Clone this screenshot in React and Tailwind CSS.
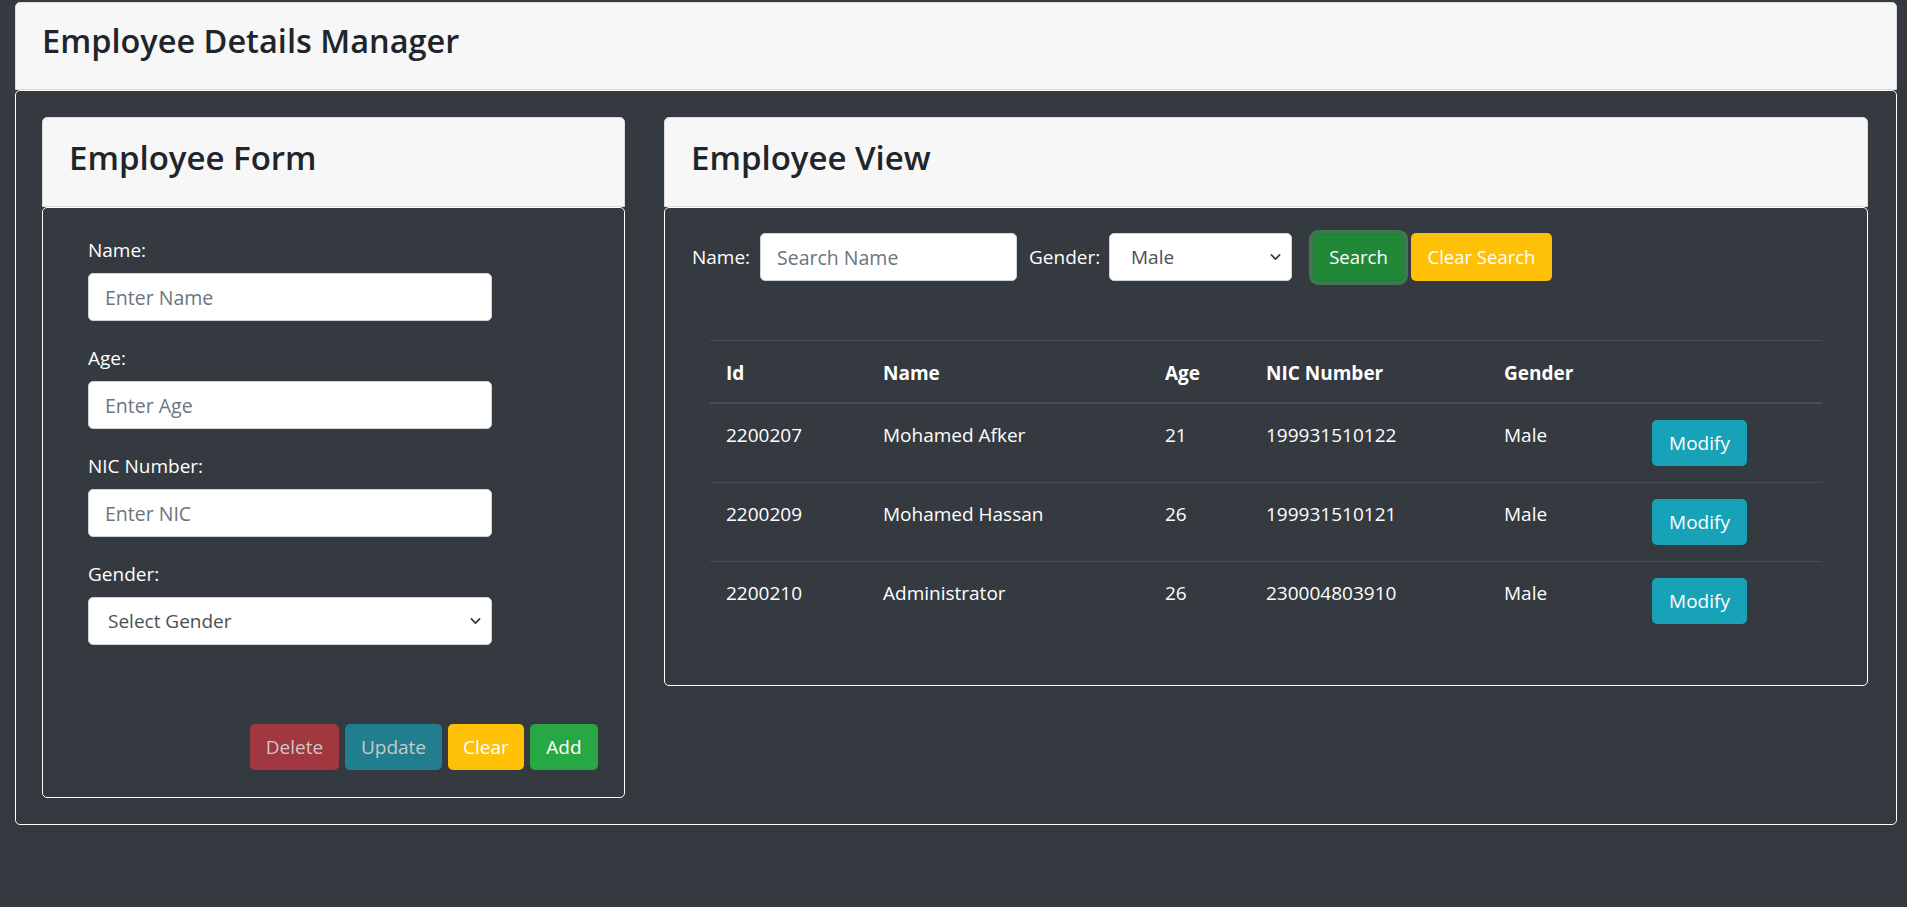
import { useState } from "react";

const employees = [
  { id: "2200207", name: "Mohamed Afker", age: "21", nic: "199931510122", gender: "Male" },
  { id: "2200209", name: "Mohamed Hassan", age: "26", nic: "199931510121", gender: "Male" },
  { id: "2200210", name: "Administrator", age: "26", nic: "230004803910", gender: "Male" },
];

function Chevron() {
  return (
    <svg
      className="pointer-events-none absolute right-[11px] top-1/2 -translate-y-1/2"
      width="11"
      height="11"
      viewBox="0 0 16 16"
      fill="none"
      stroke="#343a40"
      strokeWidth="2.4"
      strokeLinecap="round"
      strokeLinejoin="round"
    >
      <path d="M2 5l6 6 6-6" />
    </svg>
  );
}

function Field({ label, placeholder }) {
  return (
    <div className="mb-[23px]">
      <label className="block text-white text-[19px] leading-[28px] mb-[9px]">{label}</label>
      <input
        type="text"
        placeholder={placeholder}
        className="w-[404px] h-[48px] bg-white border border-[#ced4da] rounded-[5px] px-4 text-[19.5px] text-[#495057] placeholder:text-[#6c757d] outline-none"
      />
    </div>
  );
}

function EmployeeForm() {
  const [gender, setGender] = useState("");

  return (
    <div className="w-[583px] shrink-0">
      <div className="h-[90px] bg-[#f7f7f7] border border-[#dcdcdc] rounded-t-[5px] px-[26px] pt-[20px]">
        <h2 className="text-[33px] leading-[40px] font-semibold text-[#212529]">Employee Form</h2>
      </div>
      <div className="bg-[#343a40] border border-white rounded-[5px] pl-[45px] pr-[26px] pt-[28px] pb-[27px]">
        <Field label="Name:" placeholder="Enter Name" />
        <Field label="Age:" placeholder="Enter Age" />
        <Field label="NIC Number:" placeholder="Enter NIC" />
        <div>
          <label className="block text-white text-[19px] leading-[28px] mb-[9px]">Gender:</label>
          <div className="relative w-[404px]">
            <select
              value={gender}
              onChange={(e) => setGender(e.target.value)}
              className="appearance-none w-full h-[48px] bg-white border border-[#ced4da] rounded-[5px] pl-[19px] text-[19px] text-[#495057] outline-none"
            >
              <option value="">Select Gender</option>
              <option value="Male">Male</option>
              <option value="Female">Female</option>
            </select>
            <Chevron />
          </div>
        </div>
        <div className="mt-[79px] flex justify-end gap-[6px]">
          <button className="w-[89px] h-[46px] rounded-[5px] bg-[#a1373f] text-[#c9c9cb] text-[19px]">Delete</button>
          <button className="w-[97px] h-[46px] rounded-[5px] bg-[#217e8e] text-[#c9c9cb] text-[19px]">Update</button>
          <button className="w-[76px] h-[46px] rounded-[5px] bg-[#ffc107] text-white text-[19px]">Clear</button>
          <button className="w-[68px] h-[46px] rounded-[5px] bg-[#28a745] text-white text-[19px]">Add</button>
        </div>
      </div>
    </div>
  );
}

function EmployeeView() {
  const [gender, setGender] = useState("Male");

  return (
    <div className="flex-1 mr-[2px]">
      <div className="h-[90px] bg-[#f7f7f7] border border-[#dcdcdc] rounded-t-[5px] px-[26px] pt-[20px]">
        <h2 className="text-[33px] leading-[40px] font-semibold text-[#212529]">Employee View</h2>
      </div>
      <div className="bg-[#343a40] border border-white rounded-[5px] px-[27px] pt-[25px] pb-[45px]">
        <div className="flex items-center h-[48px]">
          <label className="w-[68px] text-white text-[19px]">Name:</label>
          <input
            type="text"
            placeholder="Search Name"
            className="w-[257px] h-[48px] bg-white border border-[#ced4da] rounded-[5px] px-4 text-[19.5px] text-[#495057] placeholder:text-[#6c757d] outline-none"
          />
          <label className="ml-[12px] w-[80px] text-white text-[19px]">Gender:</label>
          <div className="relative w-[183px]">
            <select
              value={gender}
              onChange={(e) => setGender(e.target.value)}
              className="appearance-none w-full h-[48px] bg-white border border-[#ced4da] rounded-[5px] pl-[21px] text-[19px] text-[#495057] outline-none"
            >
              <option value="">Select Gender</option>
              <option value="Male">Male</option>
              <option value="Female">Female</option>
            </select>
            <Chevron />
          </div>
          <button className="ml-[21px] w-[91px] h-[47px] rounded-[5px] bg-[#218838] border border-[#1e7e34] ring-4 ring-[#3e7750] text-white text-[18.5px]">
            Search
          </button>
          <button className="ml-[7px] w-[141px] h-[48px] rounded-[5px] bg-[#ffc107] text-white text-[18.5px]">
            Clear Search
          </button>
        </div>

        <div className="mx-[18px] mt-[59px]">
          <table className="w-full table-fixed border-collapse text-white text-[19px]">
            <thead>
              <tr className="border-t border-[#454d55]">
                <th className="w-[157px] text-left font-bold px-4 pt-[17px] pb-[14px] leading-[30px] border-b-2 border-[#454d55]">Id</th>
                <th className="w-[282px] text-left font-bold px-4 pt-[17px] pb-[14px] leading-[30px] border-b-2 border-[#454d55]">Name</th>
                <th className="w-[101px] text-left font-bold px-4 pt-[17px] pb-[14px] leading-[30px] border-b-2 border-[#454d55]">Age</th>
                <th className="w-[238px] text-left font-bold px-4 pt-[17px] pb-[14px] leading-[30px] border-b-2 border-[#454d55]">NIC Number</th>
                <th className="w-[148px] text-left font-bold px-4 pt-[17px] pb-[14px] leading-[30px] border-b-2 border-[#454d55]">Gender</th>
                <th className="text-left px-4 pt-[17px] pb-[14px] border-b-2 border-[#454d55]"></th>
              </tr>
            </thead>
            <tbody>
              {employees.map((emp, i) => (
                <tr key={emp.id} className={i > 0 ? "border-t border-[#454d55]" : ""}>
                  <td className="align-top px-4 pt-4 leading-[30px]">{emp.id}</td>
                  <td className="align-top px-4 pt-4 leading-[30px]">{emp.name}</td>
                  <td className="align-top px-4 pt-4 leading-[30px]">{emp.age}</td>
                  <td className="align-top px-4 pt-4 leading-[30px]">{emp.nic}</td>
                  <td className="align-top px-4 pt-4 leading-[30px]">{emp.gender}</td>
                  <td className="align-top px-4 pt-[16px] pb-4">
                    <button className="w-[95px] h-[46px] rounded-[5px] bg-[#17a2b8] text-white text-[19px]">Modify</button>
                  </td>
                </tr>
              ))}
            </tbody>
          </table>
        </div>
      </div>
    </div>
  );
}

export default function App() {
  return (
    <div className="min-h-screen bg-[#343a40] pt-[2px] pl-[15px] pr-[10px] font-['Open_Sans',sans-serif]">
      <div>
        <div className="h-[88px] bg-[#f7f7f7] border border-[#dcdcdc] rounded-t-[5px] px-[26px] pt-[18px]">
          <h1 className="text-[32.5px] leading-[40px] font-semibold text-[#212529]">Employee Details Manager</h1>
        </div>
        <div className="bg-[#343a40] border border-white rounded-[5px] p-[26px] flex items-start gap-[39px]">
          <EmployeeForm />
          <EmployeeView />
        </div>
      </div>
    </div>
  );
}
